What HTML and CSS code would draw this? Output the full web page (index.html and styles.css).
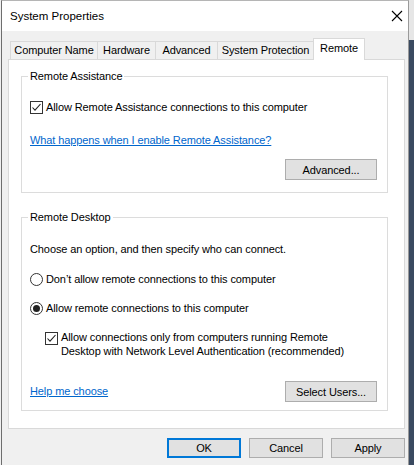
FILE: index.html
```html
<!DOCTYPE html>
<html>
<head>
<meta charset="utf-8">
<link rel="stylesheet" href="styles.css">
</head>
<body>
<div class="screen">
  <div class="window">
    <div class="titlebar">
      <span class="title">System Properties</span>
      <svg class="close" width="12" height="12" viewBox="0 0 12 12"><path d="M1 1 L11 11 M11 1 L1 11" stroke="#000" stroke-width="1.1" fill="none"/></svg>
    </div>
    <div class="body">
      <div class="tabs">
        <div class="tab t1">Computer Name</div>
        <div class="tab t2">Hardware</div>
        <div class="tab t3">Advanced</div>
        <div class="tab t4">System Protection</div>
        <div class="tab selected">Remote</div>
      </div>
      <div class="panel">
        <div class="group g1">
          <div class="group-title">Remote Assistance</div>
          <div class="row r-check1">
            <svg class="box" width="13" height="13" viewBox="0 0 13 13"><rect x="0.5" y="0.5" width="12" height="12" fill="#fff" stroke="#333"/><path d="M2.5 6.5 L5 9.2 L10.5 3" stroke="#222" stroke-width="1.1" fill="none"/></svg>
            <span class="label">Allow Remote Assistance connections to this computer</span>
          </div>
          <a class="link l1" href="#">What happens when I enable Remote Assistance?</a>
          <div class="btn-row b1"><button class="btn wide">Advanced...</button></div>
        </div>
        <div class="group g2">
          <div class="group-title">Remote Desktop</div>
          <div class="row r-choose"><span class="label">Choose an option, and then specify who can connect.</span></div>
          <div class="row r-radio1">
            <svg class="box" width="13" height="13" viewBox="0 0 13 13"><circle cx="6.5" cy="6.5" r="6" fill="#fff" stroke="#333"/></svg>
            <span class="label">Don’t allow remote connections to this computer</span>
          </div>
          <div class="row r-radio2">
            <svg class="box" width="13" height="13" viewBox="0 0 13 13"><circle cx="6.5" cy="6.5" r="6" fill="#fff" stroke="#333"/><circle cx="6.5" cy="6.5" r="3.5" fill="#222"/></svg>
            <span class="label">Allow remote connections to this computer</span>
          </div>
          <div class="row r-check2">
            <svg class="box box2" width="13" height="13" viewBox="0 0 13 13"><rect x="0.5" y="0.5" width="12" height="12" fill="#fff" stroke="#333"/><path d="M2.5 6.5 L5 9.2 L10.5 3" stroke="#222" stroke-width="1.1" fill="none"/></svg>
            <span class="label multi">Allow connections only from computers running Remote<br>Desktop with Network Level Authentication (recommended)</span>
          </div>
          <div class="btn-row b2">
            <a class="link" href="#">Help me choose</a>
            <button class="btn wide">Select Users...</button>
          </div>
        </div>
      </div>
      <div class="footer">
        <button class="btn foot ok">OK</button>
        <button class="btn foot">Cancel</button>
        <button class="btn foot">Apply</button>
      </div>
    </div>
  </div>
  <div class="edge"></div>
</div>
</body>
</html>
```
FILE: styles.css
```css
html, body {
  margin: 0;
  padding: 0;
}
body {
  background: #f0f0f0;
  font-family: "Liberation Sans", Arial, sans-serif;
  font-size: 11px;
  letter-spacing: -0.1px;
  color: #000;
}
.screen {
  display: flex;
  width: 414px;
  height: 465px;
  overflow: hidden;
}
.window {
  margin-left: 1px;
  width: 408px;
  height: 465px;
  border-left: 1px solid #6e6e6e;
  border-right: 1px solid #9a9a9a;
  border-top: 1px solid #b5b5b5;
  box-sizing: border-box;
  display: flex;
  flex-direction: column;
  background: #f0f0f0;
}
.edge {
  flex: 1;
  background: linear-gradient(#e6e6e6 0 40px, #3a4a60 40px);
}
.titlebar {
  height: 30px;
  background: #fff;
  display: flex;
  align-items: center;
  padding-left: 8px;
  padding-right: 5px;
  flex-shrink: 0;
}
.title {
  font-size: 11.5px;
  letter-spacing: 0;
  line-height: 15px;
  margin-top: 1px;
  flex: 1;
}
.body {
  padding-left: 6px;
  flex: 1;
}
.tabs {
  margin-top: 7px;
  margin-left: 2px;
  height: 21px;
  display: flex;
  align-items: flex-end;
}
.tab {
  height: 18px;
  box-sizing: border-box;
  border-top: 1px solid #d9d9d9;
  border-left: 1px solid #d9d9d9;
  line-height: 17px;
  text-align: center;
  white-space: nowrap;
  background: #f0f0f0;
}
.t1 { width: 87px; }
.t2 { width: 58px; }
.t3 { width: 62px; }
.t4 { width: 96px; }
.tab.selected {
  width: 52px;
  height: 22px;
  line-height: 19px;
  border-right: 1px solid #d9d9d9;
  background: #fff;
  margin-bottom: -1px;
  position: relative;
  z-index: 1;
}
.panel {
  width: 397px;
  box-sizing: border-box;
  border: 1px solid #d9d9d9;
  background: #fff;
  padding-top: 16px;
  padding-bottom: 17px;
  padding-left: 12px;
}
.group {
  width: 367px;
  box-sizing: border-box;
  border: 1px solid #dcdcdc;
  display: flex;
  flex-direction: column;
  align-items: flex-start;
  padding-left: 8px;
  padding-right: 10px;
}
.g1 { padding-bottom: 12px; }
.g2 { margin-top: 24px; padding-bottom: 8px; }
.group-title {
  margin-top: -8px;
  margin-left: -2px;
  padding: 0 2px;
  line-height: 15px;
  background: #fff;
  white-space: nowrap;
}
.row {
  display: flex;
  align-items: center;
  line-height: 15px;
  height: 15px;
  white-space: nowrap;
}
.box {
  flex-shrink: 0;
  margin-right: 3px;
}
.r-check1 { margin-top: 16px; }
.l1 { margin-top: 18px; }
.link {
  color: #0066cc;
  text-decoration: underline;
  line-height: 15px;
  white-space: nowrap;
}
.btn-row {
  align-self: stretch;
  display: flex;
  justify-content: flex-end;
  align-items: center;
}
.b1 { margin-top: 11px; }
.b2 { margin-top: 23px; justify-content: space-between; }
.btn {
  font-family: inherit;
  font-size: 11px;
  letter-spacing: -0.1px;
  color: #000;
  background: #e1e1e1;
  border: 1px solid #adadad;
  padding: 0;
  margin: 0;
  height: 21px;
  box-sizing: border-box;
}
.wide { width: 92px; }
.r-choose { margin-top: 17px; }
.r-radio1 { margin-top: 15px; }
.r-radio2 { margin-top: 14px; }
.r-check2 {
  margin-top: 14px;
  margin-left: 15px;
  height: 28px;
  align-items: flex-start;
}
.box2 { margin-top: 2px; }
.multi { line-height: 14px; }
.footer {
  margin-top: 9px;
  display: flex;
  justify-content: flex-end;
  gap: 8px;
  padding-right: 3px;
}
.foot {
  width: 74px;
  height: 20px;
}
.ok {
  border: 2px solid #0078d7;
}
```
